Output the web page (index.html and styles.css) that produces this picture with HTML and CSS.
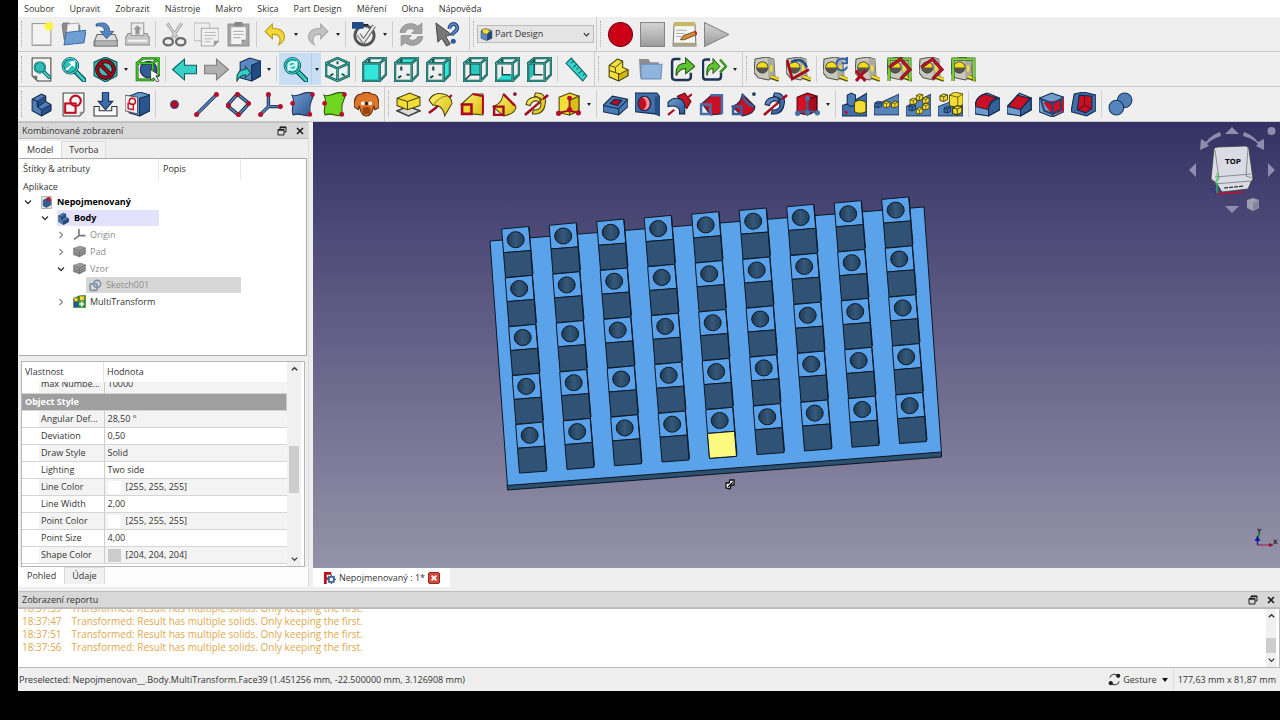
FILE: index.html
```html
<!DOCTYPE html>
<html lang="cs">
<head>
<meta charset="utf-8">
<title>FreeCAD</title>
<link rel="stylesheet" href="styles.css">
</head>
<body>
<svg class="defs" aria-hidden="true">
<defs>
<linearGradient id="gBlue" x1="0" y1="0" x2="1" y2="1"><stop offset="0" stop-color="#729fcf"/><stop offset="1" stop-color="#2a5591"/></linearGradient>
<linearGradient id="gGrey" x1="0" y1="0" x2="0" y2="1"><stop offset="0" stop-color="#d5d5d5"/><stop offset="1" stop-color="#9c9c9c"/></linearGradient>
<linearGradient id="gYel" x1="0" y1="0" x2="1" y2="1"><stop offset="0" stop-color="#fdf37a"/><stop offset="1" stop-color="#d9bd10"/></linearGradient>
<radialGradient id="gSun"><stop offset="0" stop-color="#fff23a"/><stop offset=".5" stop-color="#fff23a"/><stop offset="1" stop-color="#fff23a" stop-opacity="0"/></radialGradient>
<linearGradient id="gHole" x1="0" y1="0" x2="1" y2="0"><stop offset="0" stop-color="#1f3a52"/><stop offset=".5" stop-color="#35587a"/><stop offset="1" stop-color="#233f58"/></linearGradient>
</defs>

<symbol id="new" viewBox="0 0 24 24"><rect x="3" y="1.500" width="18" height="21" fill="#f3f3f3" stroke="#999"/><path d="M4 22h16" stroke="#aaa"/><circle cx="19" cy="4" r="5.500" fill="url(#gSun)"/></symbol>
<symbol id="open" viewBox="0 0 24 24"><path d="M1 3l1-2h6l2 2h8v14H3z" fill="#8b8b8b" stroke="#666" stroke-width=".7"/><path d="M6 2l11-1v14H5z" fill="#f2f2f2" stroke="#888" stroke-width=".6"/><path d="M5 10l19-2-2 12-19 2z" fill="#6f9fd2" stroke="#3c6ca5"/></symbol>
<symbol id="save" viewBox="0 0 24 24"><path d="M4 12h17l3 7v4H1v-4z" fill="#ddd" stroke="#666"/><path d="M2 18h21v5H2z" fill="#b5b5b5" stroke="#777" stroke-width=".7"/><path d="M3 2c8-3 13 0 13 7h4l-7 7-6-7h4c0-4-3-6-8-5z" fill="#5585bd" stroke="#204a87" stroke-width=".7"/></symbol>
<symbol id="print" viewBox="0 0 24 24"><path d="M3 11h18l3 5v6H0v-6z" fill="#c8c8c8" stroke="#888"/><path d="M6 1h12v12H6z" fill="#ececec" stroke="#999"/><path d="M12 3l4 4h-2v5h-4V7H8z" fill="#999"/><path d="M3 18h18" stroke="#f5f5f5" stroke-width="2"/></symbol>
<symbol id="cut" viewBox="0 0 24 24"><path d="M5 1l10 15M19 1L9 16" stroke="#a9a9a9" stroke-width="3"/><path d="M5 1l10 15M19 1L9 16" stroke="#e2e2e2" stroke-width="1"/><ellipse cx="6" cy="19" rx="4.500" ry="3.500" fill="none" stroke="#6c6c6c" stroke-width="2.200"/><ellipse cx="18" cy="19" rx="4.500" ry="3.500" fill="none" stroke="#6c6c6c" stroke-width="2.200"/></symbol>
<symbol id="copy" viewBox="0 0 24 24"><rect x="0" y="1" width="15" height="17" fill="#efefef" stroke="#bbb"/><path d="M7 6h17v12l-5 5H7z" fill="#efefef" stroke="#a8a8a8"/><path d="M10 10h11M10 13h11M10 16h8M10 19h6" stroke="#bdbdbd"/><path d="M24 18h-5v5z" fill="#999"/></symbol>
<symbol id="paste" viewBox="0 0 24 24"><rect x="2" y="2" width="20" height="21" fill="#a6a6a6" stroke="#8b8b8b"/><path d="M5 5h14v12l-4 4H5z" fill="#f3f3f3"/><rect x="8" y="0" width="8" height="4" rx="1" fill="#888"/><path d="M7 9h10M7 12h10M7 15h7" stroke="#b5b5b5"/><path d="M19 17h-4v4z" fill="#8b8b8b"/></symbol>
<symbol id="undo" viewBox="0 0 24 24"><path d="M9 2L2 9l7 7v-4c7-1 9 4 6 10 10-6 6-16-6-16z" fill="#f2d83a" stroke="#b89c10"/></symbol>
<symbol id="redo" viewBox="0 0 24 24"><path d="M15 2l7 7-7 7v-4c-7-1-9 4-6 10C-1 16 3 6 15 6z" fill="#c2c2c2" stroke="#a8a8a8"/></symbol>
<symbol id="check" viewBox="0 0 26 26"><circle cx="13" cy="14" r="10" fill="#eee" stroke="#555" stroke-width="3"/><path d="M7 13l5 7L23 4" fill="none" stroke="#666" stroke-width="4.500"/><path d="M7 13l5 7L23 4" fill="none" stroke="#e5e5e5" stroke-width="2.500"/><rect x="0" y="0" width="12" height="7" fill="#204a87"/><path d="M12 3h5" stroke="#222" stroke-width="2"/></symbol>
<symbol id="refresh" viewBox="0 0 24 24"><path d="M1 10C2 2 12-1 18 4l4-3v10H12l3-3c-4-3-8-1-9 2zM23 14c-1 8-11 11-17 6l-4 3V13h10l-3 3c4 3 8 1 9-2z" fill="#a3a3a3" stroke="#8b8b8b" stroke-width=".7"/></symbol>
<symbol id="whats" viewBox="0 0 26 26"><path d="M1 1l2 20 4-4 5 8 4-2-5-8 6-2z" fill="#777" stroke="#444"/><path d="M15 7c0-7 9-6 8 0-1 4-5 3-5 7" fill="none" stroke="#204a87" stroke-width="4"/><path d="M15 7c0-7 9-6 8 0-1 4-5 3-5 7" fill="none" stroke="#6c93c4" stroke-width="1.500"/><circle cx="19" cy="20" r="2.600" fill="#2d5893"/></symbol>
<symbol id="wb" viewBox="0 0 24 24"><path d="M2 5l10-3 10 3v14l-10 4-10-4z" fill="#5c88bd" stroke="#1b355a"/><path d="M13 10l9-4v13l-9 4z" fill="#23497c"/><path d="M4 3l8-2 6 4-5 7-8-3z" fill="#f0dd37" stroke="#534a07"/></symbol>
<symbol id="rec" viewBox="0 0 24 24"><circle cx="12" cy="12" r="11.500" fill="#cb0017" stroke="#790012"/></symbol>
<symbol id="stop" viewBox="0 0 24 24"><rect x=".500" y=".500" width="23" height="23" fill="url(#gGrey)" stroke="#858585"/></symbol>
<symbol id="macro" viewBox="0 0 24 24"><path d="M2 2h20l1 21H1z" fill="#f6f6f3" stroke="#777"/><path d="M2 0h20v4H2z" fill="#c7b76b"/><path d="M2 20h21v3H1z" fill="#aaa583"/><path d="M4 8h10M4 11h8M4 14h5" stroke="#aaa"/><path d="M8 17l3-4 11-4 2 3-12 5z" fill="#d28a3d" stroke="#65421c" stroke-width=".8"/><path d="M22 9l2 3" stroke="#c22" stroke-width="2"/></symbol>
<symbol id="play" viewBox="0 0 24 24"><path d="M.500 .500v23L24 12z" fill="url(#gGrey)" stroke="#858585"/></symbol>

<symbol id="lens" viewBox="0 0 24 24"><path d="M14 14l8 8" stroke="#0b4e55" stroke-width="5" stroke-linecap="round"/><path d="M14 14l8 8" stroke="#39d0c5" stroke-width="2.800" stroke-linecap="round"/><circle cx="9" cy="8.500" r="7.200" fill="#2fbfb9" stroke="#0b4e55" stroke-width="2.400"/><circle cx="9" cy="8.500" r="7.200" fill="none" stroke="#49ded4" stroke-width="1"/></symbol>
<symbol id="fitall" viewBox="0 0 24 24"><path d="M3 1h18v22H8l-5-5z" fill="#f4f4f2" stroke="#444"/><path d="M3 18h5v5z" fill="#777"/><use href="#lens" x="4" y="4" width="17" height="17"/></symbol>
<symbol id="fitsel" viewBox="0 0 24 24"><use href="#lens" width="24" height="24"/><path d="M4 12l6-5-3-2 7-2-1 7-2-2-5 5z" fill="#fff"/></symbol>
<symbol id="style" viewBox="0 0 24 24"><path d="M12 0l11 5v13l-11 6L1 18V5z" fill="#31bdb5" stroke="#0b4e55"/><circle cx="12" cy="12" r="8" fill="#45b8b3" stroke="#290005" stroke-width="4"/><path d="M6 6l12 12" stroke="#290005" stroke-width="4"/><circle cx="12" cy="12" r="8" fill="none" stroke="#970b1c" stroke-width="2.500"/><path d="M6 6l12 12" stroke="#970b1c" stroke-width="2.500"/></symbol>
<symbol id="bbox" viewBox="0 0 24 24"><circle cx="13" cy="12" r="8" fill="#315b96" stroke="#142a4c"/><path d="M2 6h15v16H2zM2 6l6-5h15l-6 5M23 1v16l-6 5" fill="none" stroke="#154c08" stroke-width="2.600"/><path d="M2 6h15v16H2zM2 6l6-5h15l-6 5M23 1v16l-6 5" fill="none" stroke="#45cb28" stroke-width="1.500"/><path d="M15 12v10l3-2 3 4 2-1-3-5h4z" fill="#fff" stroke="#333" stroke-width=".8"/></symbol>
<symbol id="back" viewBox="0 0 24 24"><path d="M.500 12L12 2v6h11.500v8H12v6z" fill="#36d2c7" stroke="#0b5d60"/></symbol>
<symbol id="fwd" viewBox="0 0 24 24"><path d="M23.500 12L12 2v6H.500v8H12v6z" fill="#b0b0b0" stroke="#7d7d7d"/></symbol>
<symbol id="link" viewBox="0 0 24 24"><path d="M4 5l9-4 11 3v14l-9 5-11-3z" fill="#5a88c0" stroke="#132c50"/><path d="M15 8l9-4v14l-9 5z" fill="#234c85" stroke="#132c50"/><path d="M1 23c-1-8 3-11 8-11V9l5 6-5 5v-3c-4 0-6 2-8 6z" fill="#35d0c5" stroke="#0b4e55"/></symbol>
<symbol id="sync" viewBox="0 0 24 24"><use href="#lens" width="24" height="24"/><path d="M5 8c1-4 5-4 7-2l1-2v4H9M13 9c-1 4-5 4-7 2l-1 2V9h4" fill="none" stroke="#e9ffff" stroke-width="1.600"/></symbol>
<symbol id="frame" viewBox="0 0 24 24"><path d="M1 6h16v17H1zM1 6l6-5h16l-6 5M23 1v16l-6 6M7 1v5" fill="none" stroke="#0d5b56" stroke-width="2.300"/><path d="M1 6h16v17H1zM1 6l6-5h16l-6 5M23 1v16l-6 6" fill="none" stroke="#70cfc4" stroke-width=".6"/></symbol>
<symbol id="inner" viewBox="0 0 24 24"><path d="M7 9v4M4 20l3-2M12 17h3" stroke="#174d4a" stroke-width="2"/></symbol>
<symbol id="iso" viewBox="0 0 24 24"><path d="M12 1l11 5v12l-11 5-11-5V6zM1 6l11 5 11-5M12 11v12" fill="#e8f3f1" stroke="#0d5b56" stroke-width="2.400"/><path d="M12 1l11 5v12l-11 5-11-5V6zM1 6l11 5 11-5M12 11v12" fill="none" stroke="#63c9be" stroke-width=".7"/><path d="M12 4v3M5 18l3-2M16 16l3 2" stroke="#164e4b" stroke-width="1.800"/></symbol>
<symbol id="vfront" viewBox="0 0 24 24"><path d="M1 6h16v17H1z" fill="#36e5da"/><use href="#frame"/></symbol>
<symbol id="vtop" viewBox="0 0 24 24"><path d="M1 6l6-5h16l-6 5z" fill="#36e5da"/><use href="#inner"/><use href="#frame"/></symbol>
<symbol id="vright" viewBox="0 0 24 24"><path d="M17 6l6-5v16l-6 6z" fill="#36e5da"/><use href="#inner"/><use href="#frame"/></symbol>
<symbol id="vrear" viewBox="0 0 24 24"><path d="M7 6h10v11H7z" fill="#2bc9c0"/><path d="M7 6v11h10M7 17l-5 5" fill="none" stroke="#174d4a" stroke-width="1.500"/><use href="#frame"/></symbol>
<symbol id="vbottom" viewBox="0 0 24 24"><path d="M1 23l6-6h16l-6 6z" fill="#2bdcd0"/><path d="M7 9v8h8" fill="none" stroke="#174d4a" stroke-width="1.500"/><use href="#frame"/></symbol>
<symbol id="vleft" viewBox="0 0 24 24"><path d="M1 6l6-5v16l-6 6z" fill="#2bc0b8"/><path d="M7 6v11h8" fill="none" stroke="#174d4a" stroke-width="1.500"/><use href="#frame"/></symbol>
<symbol id="ruler" viewBox="0 0 24 24"><path d="M7 1l15 17-4 5L2 6z" fill="#37d3ca" stroke="#0b5d60"/><path d="M9 4l-2 2M12 7l-3 3M14 10l-2 2M17 13l-3 3M20 16l-2 2" stroke="#0b5d60"/></symbol>
<symbol id="part" viewBox="0 0 24 24"><path d="M3 8l8-6 5 2v6l5 2v6l-9 5-9-4z" fill="#f4e03c" stroke="#3f3a08"/><path d="M3 8l6 2 7-6M9 10v5l6 2 6-5M12 23v-7M3 13l6 2" fill="none" stroke="#3f3a08" stroke-width=".9"/><path d="M12 17l9-5v6l-9 5z" fill="#cfb516" stroke="#3f3a08" stroke-width=".8"/></symbol>
<symbol id="folder" viewBox="0 0 24 24"><path d="M1 2h9l2 3h8v15H2z" fill="#8e8e8e"/><path d="M3 7h20l-1 14H3z" fill="#8fb5df" stroke="#6b91be"/></symbol>
<symbol id="export" viewBox="0 0 24 24"><path d="M10 2H5Q2 2 2 5v14q0 3 3 3h12q3 0 3-3v-4" fill="none" stroke="#1e3556" stroke-width="2.400"/><path d="M6 18C5 9 9 6 15 6V1l9 8-9 7v-5c-4 0-7 2-9 7z" fill="#5fc431" stroke="#1c5409"/></symbol>
<symbol id="exports" viewBox="0 0 25 24"><path d="M8 2H4Q1 2 1 5v14q0 3 3 3h12q3 0 3-3v-4" fill="none" stroke="#1e3556" stroke-width="2.400"/><path d="M5 18C4 9 7 6 11 6V1l7 8-7 7v-5c-3 0-5 2-6 7z" fill="#5fc431" stroke="#1c5409"/><path d="M18 2l6 7-6 6" fill="none" stroke="#3a961d" stroke-width="2.500"/></symbol>
<symbol id="tape" viewBox="0 0 24 24"><path d="M1 2l11-2 7 2 1 16-6 4-10-2-4-5z" fill="#c9c9c0" stroke="#55554d"/><path d="M13 1l6 1 1 16-6 3z" fill="#aaaaa2"/><circle cx="8" cy="10" r="5.500" fill="#55554b" stroke="#33332b" stroke-width=".6"/><path d="M3 10a5 5 0 0 1 10 0z" fill="#f4dc19"/><path d="M16.500 8v6" stroke="#f2df30" stroke-width="2.500"/><path d="M16 19l8 3" stroke="#4a4408" stroke-width="4"/><path d="M16 18.500l8 3" stroke="#ead52b" stroke-width="2.500"/></symbol>
<symbol id="angle" viewBox="0 0 24 24"><use href="#tape"/><path d="M1 3l5 18 16-9" fill="none" stroke="#a3091b" stroke-width="2.600"/><path d="M5 5c7-4 12-2 15 5" fill="none" stroke="#274e82" stroke-width="2.600"/></symbol>
<symbol id="tref" viewBox="0 0 24 24"><use href="#tape"/><path d="M13 7c0-7 8-6 9-4l1-3v6h-5M23 9c-1 5-8 5-9 1" fill="none" stroke="#3567a4" stroke-width="2"/></symbol>
<symbol id="tdel" viewBox="0 0 24 24"><use href="#tape"/><path d="M1 13l9 10M10 13L1 23" stroke="#ad0c1e" stroke-width="3"/></symbol>
<symbol id="greenf" viewBox="0 0 24 24"><path d="M2 23V2h20v21" fill="none" stroke="#2c6811" stroke-width="3"/><path d="M2 23V2h20v21" fill="none" stroke="#7fd33b" stroke-width="1.800"/></symbol>
<symbol id="redf" viewBox="0 0 24 24"><path d="M2 10l11-8 9 10-9 9" fill="none" stroke="#740613" stroke-width="3"/><path d="M2 10l11-8 9 10-9 9" fill="none" stroke="#be1528" stroke-width="1.800"/></symbol>
<symbol id="tall" viewBox="0 0 24 24"><use href="#tape"/><use href="#greenf"/><use href="#redf"/></symbol>
<symbol id="tred" viewBox="0 0 24 24"><use href="#tape"/><use href="#redf"/></symbol>
<symbol id="tgreen" viewBox="0 0 24 24"><use href="#tape"/><use href="#greenf"/></symbol>

<symbol id="body" viewBox="0 0 24 24"><path d="M3 7l9-5 4 2v5l5 3v6l-9 5-9-5z" fill="#507fb8" stroke="#11294d"/><path d="M12 17l9-5v6l-9 5zM8 9l8-5v5l-7 5z" fill="#28508a" stroke="#11294d" stroke-width=".8"/><path d="M3 7l5 2v5l4 3" fill="none" stroke="#11294d"/></symbol>
<symbol id="sketch" viewBox="0 0 24 24"><path d="M2 1h20v18l-4 4H2z" fill="#f5f4f3" stroke="#444"/><path d="M22 19h-4v4z" fill="#999"/><rect x="4" y="11" width="10" height="9" fill="none" stroke="#c10d25" stroke-width="2"/><circle cx="14" cy="8.500" r="5" fill="none" stroke="#c10d25" stroke-width="2"/></symbol>
<symbol id="import" viewBox="0 0 24 24"><path d="M1 14h5v4h12v-4h5v9H1z" fill="#fafafa" stroke="#333"/><path d="M9 0h6v9h4l-7 8-7-8h4z" fill="#3e6da9" stroke="#14305a"/></symbol>
<symbol id="mapsk" viewBox="0 0 24 24"><path d="M4 4l10-4 10 3v15l-10 5-10-3z" fill="#6a97cb" stroke="#132c50"/><path d="M14 6l10-3v15l-10 5z" fill="#2a558f" stroke="#132c50"/><path d="M0 3l12 2v16L0 18z" fill="#f1ebea" stroke="#444" stroke-width=".8"/><circle cx="7" cy="9" r="3" fill="none" stroke="#c10d25" stroke-width="1.300"/><path d="M3 11l5 1v5l-5-1z" fill="none" stroke="#c10d25" stroke-width="1.300"/></symbol>
<symbol id="point" viewBox="0 0 24 24"><circle cx="12" cy="12" r="3.800" fill="#b00c2a" stroke="#395a92"/></symbol>
<symbol id="line" viewBox="0 0 24 24"><path d="M2 22L22 2" stroke="#14294a" stroke-width="3.200"/><path d="M2 22L22 2" stroke="#5b87bd" stroke-width="1.600"/><circle cx="2.500" cy="21.500" r="2.400" fill="#b2102c"/><circle cx="21.500" cy="2.500" r="2.400" fill="#b2102c"/></symbol>
<symbol id="plane" viewBox="0 0 24 24"><path d="M11 2l11 9-10 11L1 13z" fill="none" stroke="#14294a" stroke-width="3.400"/><path d="M11 2l11 9-10 11L1 13z" fill="none" stroke="#5b87bd" stroke-width="1.600"/><g fill="#b2102c"><circle cx="11" cy="2.500" r="2.400"/><circle cx="21.500" cy="11" r="2.400"/><circle cx="12" cy="21.500" r="2.400"/><circle cx="2.500" cy="13" r="2.400"/></g></symbol>
<symbol id="lcs" viewBox="0 0 24 24"><path d="M10 2v12h12M10 14l-8 8" fill="none" stroke="#14294a" stroke-width="3.200"/><path d="M10 2v12h12M10 14l-8 8" fill="none" stroke="#5b87bd" stroke-width="1.500"/><g fill="#b2102c"><circle cx="10" cy="2.500" r="2.400"/><circle cx="21.500" cy="14" r="2.400"/><circle cx="2.500" cy="21.500" r="2.400"/></g></symbol>
<symbol id="blobB" viewBox="0 0 24 24"><path d="M2 3c6 3 11-5 20-2 2 6-6 8-2 21-6 3-9-3-17 0-3-6 3-11-1-19z" fill="url(#gBlue)" stroke="#173259"/><g fill="#b2102c"><circle cx="21.500" cy="2.500" r="2.300"/><circle cx="2.500" cy="11" r="2.300"/><circle cx="19" cy="21.500" r="2.300"/></g></symbol>
<symbol id="blobG" viewBox="0 0 24 24"><path d="M2 3c6 3 11-5 20-2 2 6-6 8-2 21-6 3-9-3-17 0-3-6 3-11-1-19z" fill="#6fd71d" stroke="#245208"/><g fill="#b2102c"><circle cx="21.500" cy="2.500" r="2.300"/><circle cx="2.500" cy="11" r="2.300"/><circle cx="19" cy="21.500" r="2.300"/></g></symbol>
<symbol id="clone" viewBox="0 0 24 24"><path d="M7 2c3-3 8-2 10 0 6 0 7 5 7 13l-4 2-1-4c-1 6-3 10-7 10s-6-4-7-10l-1 4-4-3C0 7 2 2 7 2z" fill="#dd762a" stroke="#5c2a07"/><path d="M8 16c2-2 6-2 8 0l-1 5H9z" fill="#9d4510"/><circle cx="8.500" cy="11" r="1.800" fill="#fff"/><circle cx="15.500" cy="11" r="1.800" fill="#fff"/><circle cx="12" cy="11" r="1.600" fill="#222"/></symbol>
<symbol id="pad" viewBox="0 0 24 24"><path d="M1 18l11-4 11 4-11 5z" fill="#ddd" stroke="#444" stroke-width="1.500"/><path d="M1 6l12-5 10 4v8l-12 4-10-4z" fill="#f2dd37" stroke="#4b4407"/><path d="M1 6l10 3 12-4M11 9v8" fill="none" stroke="#4b4407"/></symbol>
<symbol id="revol" viewBox="0 0 24 24"><path d="M1 20L23 3" stroke="#a10d22" stroke-width="2"/><path d="M1 8c2-5 8-8 14-6 5 1 8 5 8 9l-7 12c-1-8-6-11-11-10z" fill="url(#gYel)" stroke="#4b4407"/><path d="M5 13c5-8 9-9 13-9" fill="none" stroke="#9a8810"/><path d="M1 20l7-5" stroke="#a10d22" stroke-width="2"/></symbol>
<symbol id="loft" viewBox="0 0 24 24"><path d="M1 12L12 2h10v20l-11-1z" fill="url(#gYel)" stroke="#4b4407"/><path d="M12 2l10 2v17" fill="none" stroke="#b30d22" stroke-width="2"/><path d="M2 12h9v9H2z" fill="#ecd631" stroke="#a80b20" stroke-width="2.500"/></symbol>
<symbol id="pipe" viewBox="0 0 24 24"><path d="M1 14c8-3 9-8 10-12l12 12c0 6-6 8-12 9z" fill="url(#gYel)" stroke="#4b4407"/><path d="M11 2l11 11M2 14h9v8H2z" fill="none" stroke="#a80b20" stroke-width="2.300"/><circle cx="22" cy="2" r="1.800" fill="#8f1630"/></symbol>
<symbol id="helix" viewBox="0 0 24 24"><path d="M1 22L23 3" stroke="#a80b20" stroke-width="2.200"/><path d="M2 12C3 5 12 3 17 7l-2 3c-4-3-8-1-9 3zM11 1c8-1 11 5 9 12-1 6-6 9-12 8l1-4c5 1 8-2 7-7s-2-5-6-6z" fill="url(#gYel)" stroke="#4b4407"/><path d="M1 22l6-5M18 7l5-4" stroke="#a80b20" stroke-width="2.200"/></symbol>
<symbol id="prim" viewBox="0 0 24 24"><path d="M3 5l10-4 9 3v14l-9 4-10-2z" fill="#f4df34" stroke="#4b4407"/><path d="M13 8l9-4v14l-9 4z" fill="#d9bc17" stroke="#4b4407"/><path d="M13 7v11M2 20l11-2 9 2" stroke="#8f0e20" stroke-width="1.700" fill="none"/><g fill="#b2102c"><circle cx="13" cy="6" r="2.300"/><circle cx="2.500" cy="20.500" r="2.500"/><circle cx="13" cy="17" r="2.500"/><circle cx="21.500" cy="20" r="2.500"/></g></symbol>
<symbol id="pocket" viewBox="0 0 24 24"><path d="M0 13l9-9 15 3v7l-9 8-15-3z" fill="#4b7bb5" stroke="#10284b"/><path d="M0 13l15 3 9-9M15 16v6" fill="none" stroke="#10284b"/><path d="M7 11l4-4 7 1-4 5z" fill="#b40d22" stroke="#10284b"/></symbol>
<symbol id="hole" viewBox="0 0 24 24"><path d="M0 1h21l3 4v18l-5-2-19-2z" fill="#3f6fa9" stroke="#10284b"/><path d="M19 4l5 1v18l-5-2z" fill="#264e87"/><ellipse cx="9" cy="11" rx="6" ry="7" fill="#c60e22" stroke="#10284b"/><path d="M7 5c5 3 5 9 1 12 3 1 6-2 6-6s-3-8-7-6z" fill="#ee969c"/></symbol>
<symbol id="groove" viewBox="0 0 24 24"><path d="M10 4l7-3 6 8-4 7z" fill="#ca1426" stroke="#560610"/><path d="M1 10c5-6 14-5 16 2v9h-5c1-6-4-9-11-7z" fill="url(#gBlue)" stroke="#10284b"/><path d="M1 22l6-5M19 6l5-4" stroke="#a80b20" stroke-width="2"/></symbol>
<symbol id="sloft" viewBox="0 0 24 24"><path d="M3 11L12 3h10v18l-11 1z" fill="#cb1023" stroke="#10284b"/><path d="M11 3h11v18M2 12h9v9H2z" fill="none" stroke="#476fa7" stroke-width="2.400"/></symbol>
<symbol id="spipe" viewBox="0 0 24 24"><path d="M1 14c8-3 9-8 10-12l12 12c0 6-6 8-12 9z" fill="#c60f22" stroke="#10284b"/><path d="M11 2c1 7 5 10 11 12M2 14h8v7H2z" fill="none" stroke="#395f97" stroke-width="2.400"/><circle cx="22" cy="2" r="1.800" fill="#273959"/></symbol>
<symbol id="shelix" viewBox="0 0 24 24"><path d="M1 22L23 3" stroke="#a80b20" stroke-width="2.200"/><path d="M2 12C3 5 12 3 17 7l-2 3c-4-3-8-1-9 3zM11 1c8-1 11 5 9 12-1 6-6 9-12 8l1-4c5 1 8-2 7-7s-2-5-6-6z" fill="url(#gBlue)" stroke="#10284b"/><path d="M1 22l6-5M18 7l5-4" stroke="#a80b20" stroke-width="2.200"/></symbol>
<symbol id="sprim" viewBox="0 0 24 24"><path d="M2 5l10-4 9 3v14l-9 4-10-2z" fill="#d31226" stroke="#480510"/><path d="M12 7l9-3v14l-9 4z" fill="#a70c1f" stroke="#480510"/><path d="M12 7v11M2 20l10-2 10 2" stroke="#395f97" stroke-width="2" fill="none"/><g fill="#466fa5"><circle cx="12" cy="6" r="2.300"/><circle cx="2.500" cy="20.500" r="2.500"/><circle cx="12" cy="20" r="2.500"/><circle cx="21.500" cy="20" r="2.500"/></g></symbol>
<symbol id="mirror" viewBox="0 0 24 24"><path d="M0 13l9-3 15-9v22H0z" fill="#3f6fa9" stroke="#10284b"/><path d="M5 3l4-2 4 2v9l-4 2-4-2z" fill="#4d7eb8" stroke="#10284b"/><path d="M12 10q5-4 11 0v9q-5 3-11 0z" fill="#f2dd35" stroke="#4b4407"/><path d="M2 18l4 1-2 3" fill="#c40f22"/></symbol>
<symbol id="cubeY" viewBox="0 0 10 10"><path d="M1 3l4-2 4 1v5L5 9 1 8z" fill="#f2dd35" stroke="#403a05"/><path d="M1 3l4 1 4-2M5 4v5" fill="none" stroke="#403a05" stroke-width=".8"/></symbol>
<symbol id="cubeB" viewBox="0 0 10 10"><path d="M1 3l4-2 4 1v5L5 9 1 8z" fill="#3c6ba6" stroke="#10284b"/><path d="M1 3l4 1 4-2M5 4v5" fill="none" stroke="#10284b" stroke-width=".8"/></symbol>
<symbol id="linpat" viewBox="0 0 24 24"><path d="M0 13L24 2v20H0z" fill="#5684bb" stroke="#10284b" stroke-width=".8"/><use href="#cubeB" x="0" y="8" width="8" height="8"/><use href="#cubeY" x="8" y="8" width="8" height="8"/><use href="#cubeY" x="16" y="8" width="8" height="8"/></symbol>
<symbol id="polpat" viewBox="0 0 24 24"><path d="M0 14L24 2v21H0z" fill="#5684bb" stroke="#10284b" stroke-width=".8"/><use href="#cubeB" x="2" y="11" width="8" height="8"/><use href="#cubeY" x="3" y="5" width="8" height="8"/><use href="#cubeY" x="9" y="1" width="8" height="8"/><use href="#cubeY" x="15" y="4" width="8" height="8"/><use href="#cubeY" x="15" y="10" width="8" height="8"/><use href="#cubeY" x="9" y="14" width="8" height="8"/></symbol>
<symbol id="multi" viewBox="0 0 24 24"><path d="M0 14l8-3L24 2v21H0z" fill="#5684bb" stroke="#10284b" stroke-width=".8"/><path d="M11 3l5-3 8 2v10l-5 3-8-2z" fill="#f2dd35" stroke="#403a05" stroke-width=".8"/><path d="M11 3l8 2 5-3M19 5v10" fill="none" stroke="#403a05" stroke-width=".7"/><use href="#cubeY" x="1" y="1" width="9" height="9"/><use href="#cubeY" x="13" y="12" width="11" height="11"/><use href="#cubeB" x="5" y="13" width="8" height="8"/></symbol>
<symbol id="fillet" viewBox="0 0 24 24"><path d="M0 14C0 6 5 3 12 1l12 5v11l-11 6-13-2z" fill="#6e9acc" stroke="#10284b"/><path d="M0 14C1 6 6 3 9 2l13 4c-6 1-9 5-9 11z" fill="#c80f23" stroke="#10284b"/><path d="M13 17c0-5 4-9 11-11v11l-11 6z" fill="#355f99" stroke="#10284b"/></symbol>
<symbol id="chamfer" viewBox="0 0 24 24"><path d="M0 14L12 1l12 5v11l-11 6-13-2z" fill="#6e9acc" stroke="#10284b"/><path d="M1 14L10 3l12 3-9 11z" fill="#c80f23" stroke="#10284b"/><path d="M13 17l10-11v11l-10 6z" fill="#355f99" stroke="#10284b"/></symbol>
<symbol id="draft" viewBox="0 0 24 24"><path d="M0 6l12-5 12 4v14l-11 5-13-5z" fill="#729cca" stroke="#10284b"/><path d="M4 10l20-3v11l-11 4z" fill="#c80f23"/><path d="M0 6l13 5 11-6M13 11v13M2 8l3 10 8 3 8-4V7" fill="none" stroke="#204473" stroke-width="1.800"/></symbol>
<symbol id="thick" viewBox="0 0 24 24"><path d="M3 2l9-2 12 3v15l-9 5-15-4z" fill="#3f6ea8" stroke="#10284b"/><path d="M8 3l12 1v12l-6 4-8-3z" fill="#c80f23" stroke="#10284b"/><path d="M13 3v10l-6 4M13 13l7 3" fill="none" stroke="#69101d"/></symbol>
<symbol id="bool" viewBox="0 0 24 24"><circle cx="16" cy="8" r="7" fill="#517fb5" stroke="#173964"/><circle cx="8" cy="15" r="7" fill="#5485bf" stroke="#173964"/></symbol>
<symbol id="doc" viewBox="0 0 24 24"><path d="M3 1h18v22H3z" fill="#e6e6e6" stroke="#777"/><path d="M6 8l7-4 7 3v9l-8 5-6-3z" fill="#315f9c" stroke="#142c52"/><circle cx="16" cy="6" r="4" fill="#c51426"/></symbol>
<symbol id="gpad" viewBox="0 0 24 24"><path d="M1 6l12-4 10 3v11l-11 6-11-4z" fill="#9b9b9b" stroke="#777"/><path d="M1 7l11 4 11-5M1 12l11 4 11-5M1 16l11 4 11-5M12 11v11" fill="none" stroke="#6e6e6e" stroke-width="1.500"/></symbol>
<symbol id="axes" viewBox="0 0 24 24"><path d="M11 2v12h12M11 14l-9 7" fill="none" stroke="#777" stroke-width="3"/></symbol>
<symbol id="gsk" viewBox="0 0 24 24"><rect x="2" y="9" width="13" height="12" rx="2" fill="none" stroke="#7d93aa" stroke-width="3"/><circle cx="15" cy="9" r="6.500" fill="none" stroke="#7d93aa" stroke-width="3"/></symbol>
<symbol id="mt" viewBox="0 0 24 24"><path d="M1 7l9-5 13-1v22H1z" fill="#2f9d33" stroke="#1c5426"/><path d="M2 5h7v7H2zM12 2h9v8h-9z" fill="#f0df45" stroke="#5b5408"/><path d="M2 13h8v9H2z" fill="#2456a0"/><path d="M16 12v9M11.500 16.500h9" stroke="#fff" stroke-width="3"/></symbol>
<symbol id="float" viewBox="0 0 10 10"><path d="M3 3V1h6v5H7M1 3.500h6V9H1z" fill="none" stroke="#222"/><path d="M3 1.500h6M1 4h6" stroke="#222" stroke-width="1.600"/></symbol>
<symbol id="close" viewBox="0 0 10 10"><path d="M2 2l6 6M8 2L2 8" stroke="#222" stroke-width="1.700"/></symbol>
<symbol id="down" viewBox="0 0 10 10"><path d="M2 3.500l3 3 3-3" fill="none" stroke="#333" stroke-width="1.300"/></symbol>
<symbol id="up" viewBox="0 0 10 10"><path d="M2 6.500l3-3 3 3" fill="none" stroke="#333" stroke-width="1.500"/></symbol>
<symbol id="right" viewBox="0 0 10 10"><path d="M3.500 2l3 3-3 3" fill="none" stroke="#888" stroke-width="1.200"/></symbol>
<symbol id="gesture" viewBox="0 0 14 14"><path d="M2 5c1-4 5-4 8-3M12 9c-1 4-5 4-8 3" fill="none" stroke="#555" stroke-width="1.300"/><circle cx="11" cy="3" r="2.300" fill="#222"/><circle cx="3" cy="11" r="2.300" fill="#222"/></symbol>
<symbol id="fc" viewBox="0 0 14 14"><path d="M1 1h8v3H4v3h3v2H4v5H1z" fill="#b9121f"/><circle cx="9" cy="9" r="3" fill="none" stroke="#3d64a0" stroke-width="2"/><path d="M9 4v2M9 12v2M4 9h2M12 9h2M5.500 5.500l1 1M11.500 11.500l1 1M12.500 5.500l-1 1M5.500 12.500l1-1" stroke="#3d64a0" stroke-width="1.500"/></symbol>
</svg>

<div class="app">
<nav class="menubar" aria-label="Menu">
<button>Soubor</button><button>Upravit</button><button>Zobrazit</button><button>Nástroje</button><button>Makro</button><button>Skica</button><button>Part Design</button><button>Měření</button><button>Okna</button><button>Nápověda</button>
</nav>

<div class="toolrow">
<div class="toolbar">
<button class="tool" aria-label="Nový"><svg><use href="#new"/></svg></button>
<button class="tool" aria-label="Otevřít"><svg><use href="#open"/></svg></button>
<button class="tool" aria-label="Uložit"><svg><use href="#save"/></svg></button>
<button class="tool" aria-label="Tisk"><svg><use href="#print"/></svg></button>
<i class="sep"></i>
<button class="tool" aria-label="Vyjmout"><svg><use href="#cut"/></svg></button>
<button class="tool" aria-label="Kopírovat"><svg><use href="#copy"/></svg></button>
<button class="tool" aria-label="Vložit"><svg><use href="#paste"/></svg></button>
<i class="sep"></i>
<button class="tool" aria-label="Zpět"><svg><use href="#undo"/></svg></button><button class="drop" aria-label="Historie zpět"></button>
<button class="tool" aria-label="Znovu"><svg><use href="#redo"/></svg></button><button class="drop" aria-label="Historie znovu"></button>
<i class="sep"></i>
<button class="tool" aria-label="Označit"><svg><use href="#check"/></svg></button><button class="drop" aria-label="Možnosti označení"></button>
<i class="sep"></i>
<button class="tool" aria-label="Obnovit"><svg><use href="#refresh"/></svg></button>
<button class="tool wide" aria-label="Co je to"><svg><use href="#whats"/></svg></button>
</div>
<div class="toolbar">
<label class="workbench"><svg><use href="#wb"/></svg><select aria-label="Pracovní prostředí"><option>Part Design</option></select><svg class="chev"><use href="#down"/></svg></label>
</div>
<div class="toolbar">
<button class="tool" aria-label="Nahrát makro"><svg><use href="#rec"/></svg></button>
<button class="tool" aria-label="Zastavit makro"><svg><use href="#stop"/></svg></button>
<button class="tool" aria-label="Makra"><svg><use href="#macro"/></svg></button>
<button class="tool" aria-label="Spustit makro"><svg><use href="#play"/></svg></button>
</div>
</div>

<div class="toolrow">
<div class="toolbar">
<button class="tool" aria-label="Zobrazit vše"><svg><use href="#fitall"/></svg></button>
<button class="tool" aria-label="Zobrazit výběr"><svg><use href="#fitsel"/></svg></button>
<button class="tool" aria-label="Styl zobrazení"><svg><use href="#style"/></svg></button><button class="drop" aria-label="Styly"></button>
<button class="tool" aria-label="Ohraničení"><svg><use href="#bbox"/></svg></button>
<i class="sep"></i>
<button class="tool" aria-label="Předchozí"><svg><use href="#back"/></svg></button>
<button class="tool" aria-label="Další"><svg><use href="#fwd"/></svg></button>
<button class="tool" aria-label="Přejít na odkaz"><svg><use href="#link"/></svg></button><button class="drop" aria-label="Odkazy"></button>
<i class="sep"></i>
<button class="tool on" aria-label="Synchronizovat pohled"><svg><use href="#sync"/></svg></button><button class="drop on" aria-label="Pohledy"></button>
<button class="tool" aria-label="Izometrický"><svg><use href="#iso"/></svg></button>
<i class="sep"></i>
<button class="tool" aria-label="Zepředu"><svg><use href="#vfront"/></svg></button>
<button class="tool" aria-label="Shora"><svg><use href="#vtop"/></svg></button>
<button class="tool" aria-label="Zprava"><svg><use href="#vright"/></svg></button>
<i class="sep"></i>
<button class="tool" aria-label="Zezadu"><svg><use href="#vrear"/></svg></button>
<button class="tool" aria-label="Zdola"><svg><use href="#vbottom"/></svg></button>
<button class="tool" aria-label="Zleva"><svg><use href="#vleft"/></svg></button>
<i class="sep"></i>
<button class="tool" aria-label="Změřit vzdálenost"><svg><use href="#ruler"/></svg></button>
</div>
<div class="toolbar">
<button class="tool" aria-label="Vytvořit díl"><svg><use href="#part"/></svg></button>
<button class="tool" aria-label="Vytvořit skupinu"><svg><use href="#folder"/></svg></button>
<button class="tool" aria-label="Vytvořit odkaz"><svg><use href="#export"/></svg></button>
<button class="tool" aria-label="Vytvořit pododkaz"><svg><use href="#exports"/></svg></button><button class="drop" aria-label="Druhy odkazů"></button>
</div>
<div class="toolbar">
<button class="tool" aria-label="Lineární měření"><svg><use href="#tape"/></svg></button>
<button class="tool" aria-label="Úhlové měření"><svg><use href="#angle"/></svg></button>
<i class="sep"></i>
<button class="tool" aria-label="Obnovit měření"><svg><use href="#tref"/></svg></button>
<button class="tool" aria-label="Smazat měření"><svg><use href="#tdel"/></svg></button>
<button class="tool" aria-label="Přepnout vše"><svg><use href="#tall"/></svg></button>
<button class="tool" aria-label="Přepnout 3D"><svg><use href="#tred"/></svg></button>
<button class="tool" aria-label="Přepnout delta"><svg><use href="#tgreen"/></svg></button>
</div>
</div>

<div class="toolrow">
<div class="toolbar">
<button class="tool" aria-label="Těleso"><svg><use href="#body"/></svg></button>
<button class="tool" aria-label="Nový náčrt"><svg><use href="#sketch"/></svg></button>
<button class="tool" aria-label="Upravit náčrt"><svg><use href="#import"/></svg></button>
<button class="tool" aria-label="Mapovat náčrt"><svg><use href="#mapsk"/></svg></button>
<i class="sep"></i>
<button class="tool" aria-label="Bod"><svg><use href="#point"/></svg></button>
<button class="tool" aria-label="Přímka"><svg><use href="#line"/></svg></button>
<button class="tool" aria-label="Rovina"><svg><use href="#plane"/></svg></button>
<button class="tool" aria-label="Souřadný systém"><svg><use href="#lcs"/></svg></button>
<button class="tool" aria-label="Tvarový pořadač"><svg><use href="#blobB"/></svg></button>
<button class="tool" aria-label="Dílčí pořadač"><svg><use href="#blobG"/></svg></button>
<button class="tool" aria-label="Klon"><svg><use href="#clone"/></svg></button>
</div>
<div class="toolbar">
<button class="tool" aria-label="Deska"><svg><use href="#pad"/></svg></button>
<button class="tool" aria-label="Rotace"><svg><use href="#revol"/></svg></button>
<button class="tool" aria-label="Profilování"><svg><use href="#loft"/></svg></button>
<button class="tool" aria-label="Tažení"><svg><use href="#pipe"/></svg></button>
<button class="tool" aria-label="Šroubovice"><svg><use href="#helix"/></svg></button>
<button class="tool" aria-label="Primitivum"><svg><use href="#prim"/></svg></button><button class="drop" aria-label="Primitiva"></button>
<i class="sep"></i>
<button class="tool" aria-label="Kapsa"><svg><use href="#pocket"/></svg></button>
<button class="tool" aria-label="Díra"><svg><use href="#hole"/></svg></button>
<button class="tool" aria-label="Drážka"><svg><use href="#groove"/></svg></button>
<button class="tool" aria-label="Odečíst profil"><svg><use href="#sloft"/></svg></button>
<button class="tool" aria-label="Odečíst tažení"><svg><use href="#spipe"/></svg></button>
<button class="tool" aria-label="Odečíst šroubovici"><svg><use href="#shelix"/></svg></button>
<button class="tool" aria-label="Odečíst primitivum"><svg><use href="#sprim"/></svg></button><button class="drop" aria-label="Odečítaná primitiva"></button>
<i class="sep"></i>
<button class="tool" aria-label="Zrcadlit"><svg><use href="#mirror"/></svg></button>
<button class="tool" aria-label="Lineární pole"><svg><use href="#linpat"/></svg></button>
<button class="tool" aria-label="Kruhové pole"><svg><use href="#polpat"/></svg></button>
<button class="tool" aria-label="Vícenásobná transformace"><svg><use href="#multi"/></svg></button>
<i class="sep"></i>
<button class="tool" aria-label="Zaoblení"><svg><use href="#fillet"/></svg></button>
<button class="tool" aria-label="Zkosení"><svg><use href="#chamfer"/></svg></button>
<button class="tool" aria-label="Úkos"><svg><use href="#draft"/></svg></button>
<button class="tool" aria-label="Tloušťka"><svg><use href="#thick"/></svg></button>
<i class="sep"></i>
<button class="tool" aria-label="Booleovská operace"><svg><use href="#bool"/></svg></button>
</div>
</div>

<main class="work">
<aside class="combo">
<header class="dock"><h2>Kombinované zobrazení</h2><button aria-label="Uvolnit"><svg><use href="#float"/></svg></button><button aria-label="Zavřít"><svg><use href="#close"/></svg></button></header>
<div class="tabs"><button class="cur">Model</button><button>Tvorba</button></div>
<div class="tree">
<div class="treehead"><span>Štítky &amp; atributy</span><span>Popis</span></div>
<p class="appname">Aplikace</p>
<ul>
<li class="l0 bold"><svg class="tw"><use href="#down"/></svg><svg><use href="#doc"/></svg><span>Nepojmenovaný</span></li>
<li class="l1 bold active"><svg class="tw"><use href="#down"/></svg><div><svg><use href="#body"/></svg><span>Body</span></div></li>
<li class="l2 dim"><svg class="tw"><use href="#right"/></svg><svg><use href="#axes"/></svg><span>Origin</span></li>
<li class="l2 dim"><svg class="tw"><use href="#right"/></svg><svg><use href="#gpad"/></svg><span>Pad</span></li>
<li class="l2 dim"><svg class="tw"><use href="#down"/></svg><svg><use href="#gpad"/></svg><span>Vzor</span></li>
<li class="l3 dim picked"><div><svg><use href="#gsk"/></svg><span>Sketch001</span></div></li>
<li class="l2"><svg class="tw"><use href="#right"/></svg><svg><use href="#mt"/></svg><span>MultiTransform</span></li>
</ul>
</div>
<div class="props">
<div class="propmain">
<div class="prophead"><span>Vlastnost</span><span>Hodnota</span></div>
<div class="propclip">
<table>
<tr><th>max Numbe...</th><td>10000</td></tr>
<tr class="group"><th colspan="2">Object Style</th></tr>
<tr><th>Angular Def...</th><td>28,50 °</td></tr>
<tr><th>Deviation</th><td>0,50</td></tr>
<tr><th>Draw Style</th><td>Solid</td></tr>
<tr><th>Lighting</th><td>Two side</td></tr>
<tr><th>Line Color</th><td><i class="chip"></i>[255, 255, 255]</td></tr>
<tr><th>Line Width</th><td>2,00</td></tr>
<tr><th>Point Color</th><td><i class="chip"></i>[255, 255, 255]</td></tr>
<tr><th>Point Size</th><td>4,00</td></tr>
<tr><th>Shape Color</th><td><i class="chip grey"></i>[204, 204, 204]</td></tr>
</table>
</div>
</div>
<div class="scroll"><svg><use href="#up"/></svg><i class="before"></i><i class="thumb"></i><i class="after"></i><svg><use href="#down"/></svg></div>
</div>
<div class="tabs low"><button class="cur">Pohled</button><button>Údaje</button></div>
</aside>

<section class="viewcol">
<div class="view">
<svg viewBox="313 122 967 446" preserveAspectRatio="xMidYMid meet">
<defs>
<g id="blk" stroke="#0c1726" stroke-width="1">
<path d="M501.700 229l27-2.500 2 24.200-27.200 2z" fill="#5aa2ea"/>
<path d="M503.500 252.700l27.200-2.200 1.800 25-27 2z" fill="#305375"/>
<path d="M529 227l4 47" fill="none"/>
<ellipse cx="515.700" cy="239.700" rx="8.500" ry="8" fill="url(#gHole)"/>
</g>
<g id="colm"><use href="#blk"/><use href="#blk" x="3.500" y="48.900"/><use href="#blk" x="7" y="97.800"/><use href="#blk" x="10.500" y="146.700"/><use href="#blk" x="14" y="195.600"/></g>
</defs>
<path d="M490 241l434-34 17.500 246-434 33z" fill="#5aa2ea" stroke="#0c1726"/>
<path d="M507 485.500l434.500-33.500v5l-434 33z" fill="#2d506f" stroke="#0c1726"/>
<g>
<use href="#colm"/><use href="#colm" x="47.500" y="-3.700"/><use href="#colm" x="95" y="-7.400"/><use href="#colm" x="142.500" y="-11.100"/><use href="#colm" x="190" y="-14.800"/><use href="#colm" x="237.500" y="-18.500"/><use href="#colm" x="285" y="-22.200"/><use href="#colm" x="332.500" y="-25.900"/><use href="#colm" x="380" y="-29.600"/>
</g>
<path d="M707.500 433.500l27-2.200 2 25-27 2z" fill="#fbf97e" stroke="#0c1726"/>
<path d="M726 488v-5h3l1-3h4v5h-3l-1 4z" fill="#fff" stroke="#111" stroke-width="1.300"/><path d="M728 487l5-5" stroke="#111" stroke-width="1.200"/>
<g fill="#8f8cae">
<path d="M1232 127l7 7h-14zM1232 213l7-7h-14zM1189 170l7-7v14zM1275 170l-7-7v14z"/>
<path d="M1220 132c-6 2-10 5-14 10l-5-3-1 11 9-4-2-2c4-4 8-6 14-8zM1244 132c6 2 10 5 14 10l6-3 0 11-8-4 2-2c-4-4-8-6-15-8z"/>
<circle cx="1271.500" cy="131" r="4"/>
</g>
<path d="M1247 200l6-2 6 2v8l-6 3-6-3z" fill="#9f9eae"/><path d="M1253 203l6-3v8l-6 3z" fill="#85849c"/>
<path d="M1214 149q1-2 4-2l27-1q4 0 4 4l4 29-2 3-3 7-26 3-5-8-6-5z" fill="#dadbe5" stroke="#333" stroke-width=".7"/>
<path d="M1215 150l4 29-5 3M1248 148l-2 28 6 2M1215 177l36-3M1214 184l37-3" fill="none" stroke="#777" stroke-width=".8"/>
<path d="M1224 188l20-2" stroke="#222" stroke-width="1.200" stroke-dasharray="4 1"/>
<text x="1225" y="164" class="cubetext">TOP</text>
<path d="M1217 194v-21" stroke="#22df55"/><path d="M1217 194l26-2" stroke="#c01035" stroke-width="1.500"/><path d="M1217 194l-7-6" stroke="#2020bd"/>
<path d="M1257.500 545v-9" stroke="#2020a8" stroke-width="1.500"/><path d="M1257.500 538l2-5" stroke="#168636" stroke-width="2"/><path d="M1254.500 541l3-5 3 5z" fill="#181a90"/><path d="M1257.500 545h14" stroke="#9b1740"/><path d="M1269 543l5 2-5 2z" fill="#8b1236"/>
<text x="1257" y="533" class="axistext">Y</text><text x="1273" y="544" class="axistext">X</text>
</svg>
</div>
<div class="doctabs"><div class="doctab"><svg><use href="#fc"/></svg><span>Nepojmenovaný : 1*</span><button aria-label="Zavřít dokument"><svg viewBox="0 0 10 10"><path d="M2 2l6 6M8 2L2 8" stroke="#fff" stroke-width="2"/></svg></button></div></div>
</section>
</main>

<section class="report">
<header class="dock"><h2>Zobrazení reportu</h2><button aria-label="Uvolnit"><svg><use href="#float"/></svg></button><button aria-label="Zavřít"><svg><use href="#close"/></svg></button></header>
<div class="log">
<div class="loglines">
<p><time>18:37:39</time>Transformed: Result has multiple solids. Only keeping the first.</p>
<p><time>18:37:47</time>Transformed: Result has multiple solids. Only keeping the first.</p>
<p><time>18:37:51</time>Transformed: Result has multiple solids. Only keeping the first.</p>
<p><time>18:37:56</time>Transformed: Result has multiple solids. Only keeping the first.</p>
</div>
<div class="scroll"><svg><use href="#up"/></svg><i class="before"></i><i class="thumb"></i><svg><use href="#down"/></svg></div>
</div>
</section>

<footer class="status">
<span class="msg">Preselected: Nepojmenovan__.Body.MultiTransform.Face39 (1.451256 mm, -22.500000 mm, 3.126908 mm)</span>
<button class="nav"><svg><use href="#gesture"/></svg>Gesture<i class="tri"></i></button>
<span class="dims">177,63 mm x 81,87 mm</span>
</footer>
</div>
</body>
</html>
```

FILE: styles.css
```css
* { box-sizing: border-box; }
body {
  margin: 0;
  background: #000;
  font: 10px/14px "Open Sans", "Noto Sans", sans-serif;
  color: #333;
}
button, select { font: inherit; color: inherit; border: 0; padding: 0; background: none; }
h2, p, ul { margin: 0; padding: 0; font: inherit; list-style: none; }
svg { display: block; flex: none; }
.defs { position: absolute; width: 0; height: 0; }

.app {
  height: 100vh;
  border: solid #000;
  border-width: 0 0 29px 18px;
  background: #efefef;
  display: flex;
  flex-direction: column;
  overflow: hidden;
}

.menubar { flex: none; height: 17px; padding: 0 6px; display: flex; gap: 15px; background: #fff; font-size: 9px; }
.toolrow { flex: none; height: 35px; display: flex; border-bottom: 1px solid #c9c9c9; white-space: nowrap; }
.toolbar { display: flex; align-items: center; padding-left: 7px; position: relative; }
.toolbar + .toolbar { border-left: 1px solid #ccc; margin-left: 2px; }
.toolbar::before { content: ""; position: absolute; left: 3px; top: 4px; bottom: 4px; border-left: 1px dotted #aaa; }
.tool { width: 32px; height: 32px; display: grid; place-items: center; }
.tool svg { width: 25px; height: 25px; }
.tool.wide { width: 40px; }
.drop { width: 10px; height: 32px; display: grid; place-items: center; }
.drop::after { content: ""; border: 2px solid transparent; border-top: 3px solid #222; border-bottom: 0; }
.on { background: #c7def5; }
.drop.on { border-left: 1px solid #b3cfec; }
.sep { width: 5px; height: 26px; background: linear-gradient(#cfcfcf, #cfcfcf) center / 1px 100% no-repeat; }

.workbench { display: flex; align-items: center; position: relative; width: 117px; height: 18px; border: 1px solid #bbb; background: #e4e4e4; font-size: 9px; }
.workbench select { flex: 1; height: 16px; padding-left: 17px; appearance: none; }
.workbench svg { position: absolute; left: 2px; width: 13px; height: 13px; }
.workbench .chev { left: auto; right: 2px; width: 9px; height: 9px; }

.work { flex: 1; min-height: 0; display: flex; gap: 4px; }
.combo { width: 291px; flex: none; display: flex; flex-direction: column; border-right: 1px solid #ddd; margin-bottom: 4px; }
.dock { flex: none; height: 17px; display: flex; align-items: center; gap: 8px; padding: 0 4px; background: #d8d8d8; border: solid #bdbdbd; border-width: 1px 0; font-size: 9px; }
.dock h2 { flex: 1; }
.combo .dock { padding-right: 3px; }
.dock svg { width: 10px; height: 10px; }
.tabs { flex: none; display: flex; align-items: flex-end; height: 19px; padding-left: 1px; font-size: 9px; }
.tabs button { height: 17px; padding: 0 7px; border: 1px solid #ddd; border-bottom: 0; background: #f1f1f1; }
.tabs .cur { background: #fff; border-color: #fff; }
.tree { flex: 1; min-height: 0; margin: 0 1px 5px 1px; background: #fff; border: solid #aaa; border-width: 1px 1px 1px 0; font-size: 9px; }
.treehead { display: flex; height: 21px; }
.treehead span { width: 82px; padding: 3px 4px; border-right: 1px solid #e8e8e8; }
.treehead span:first-child { width: 140px; }
.appname { padding: 0 4px; height: 14px; }
.tree li, .tree li div { display: flex; align-items: center; height: 16px; }
.tree li { padding-left: 4px; }
.tree svg { width: 13px; height: 13px; margin-right: 4px; }
.tree .tw { width: 10px; height: 10px; margin-right: 7px; }
.tree .l1 { padding-left: 21px; }
.tree .l2 { height: 17px; padding-left: 37px; }
.tree .l3 { padding-left: 67px; }
.bold { color: #000; font-weight: 700; }
.dim { color: #8d8d8d; }
.tree li.active { padding-right: 147px; }
.active div { flex: 1; background: #e3e1fc; }
.tree li.picked { padding-right: 65px; }
.picked div { flex: 1; background: #d7d7d7; padding-left: 3px; }

.props { flex: none; height: 206px; margin: 0 3px; padding-right: 3px; display: flex; background: #fff; border: 1px solid #b5b5b5; font-size: 9px; }
.propmain { flex: 1; display: flex; flex-direction: column; min-width: 0; }
.prophead { height: 20px; flex: none; display: flex; }
.prophead span { width: 82px; padding: 3px; border-right: 1px solid #e5e5e5; }
.prophead span + span { border: 0; }
.propclip { flex: 1; overflow: hidden; }
.propclip table { width: 100%; border-collapse: collapse; margin-top: -6px; table-layout: fixed; }
.propclip tr { height: 17px; }
.propclip th, .propclip td { padding: 0 3px; border-bottom: 1px solid #d5d5d5; font-weight: 400; text-align: left; line-height: 16px; white-space: nowrap; }
.propclip th { width: 82px; padding-left: 19px; padding-right: 0; border-right: 1px solid #ccc; background: linear-gradient(#fff, #fff) 0 0 / 17px 100% no-repeat; }
.propclip tr:nth-child(odd) { background: #f3f3f3; }
.propclip .group th { padding-left: 3px; background: #9f9f9f; color: #fff; font-weight: 700; }
.chip { display: inline-block; width: 13px; height: 13px; margin-right: 5px; background: #fff; vertical-align: middle; }
.chip.grey { background: #ccc; }
.scroll { width: 14px; display: flex; flex-direction: column; align-items: center; background: #f0f0f0; }
.scroll svg { width: 9px; height: 14px; }
.scroll .thumb { width: 10px; background: #cdcdcd; flex: 48; }
.scroll .before { flex: 70; }
.scroll .after { flex: 59; }
.low { align-items: flex-start; height: 20px; background: #fcfcfc; }

.viewcol { flex: 1; min-width: 0; display: flex; flex-direction: column; }
.view { flex: 1; min-height: 0; background: linear-gradient(#343264, #656289 50%, #9593a8); }
.view svg { width: 100%; height: 100%; }
.cubetext { font: bold 7px "DejaVu Sans", sans-serif; fill: #111; }
.axistext { font: bold 6px "DejaVu Sans", sans-serif; fill: #222; }
.doctabs { flex: none; height: 23px; display: flex; align-items: flex-start; }
.doctab { height: 19px; display: flex; align-items: center; gap: 3px; padding: 0 10px; background: #fff; font-size: 9px; }
.doctab svg { width: 13px; height: 13px; }
.doctab button { width: 12px; height: 12px; display: grid; place-items: center; background: #d34a3a; border: 1px solid #8f2b22; border-radius: 2px; }
.doctab button svg { width: 8px; height: 8px; }

.report { flex: none; }
.log { height: 60px; display: flex; justify-content: space-between; background: #fff; border: solid #b9b9b9; border-width: 1px 1px 1px 0; padding-right: 3px; }
.loglines { overflow: hidden; padding-left: 4px; color: #e0a850; }
.loglines p { height: 13px; line-height: 13px; }
.loglines p:first-child { margin-top: -7px; }
.loglines time { margin-right: 10px; }
.log .scroll { width: 10px; }
.log .before { flex: 15; }
.log .thumb { flex: 15; }

.status { flex: none; height: 23px; display: flex; align-items: center; padding: 0 4px 0 1px; font-size: 9px; }
.msg { flex: 1; }
.nav { display: flex; align-items: center; gap: 2px; height: 20px; padding: 0 5px 0 1px; border-right: 1px solid #ddd; }
.nav svg { width: 13px; height: 13px; }
.tri { margin-left: 3px; border: 3px solid transparent; border-top: 4px solid #111; border-bottom: 0; }
.dims { padding-left: 4px; }
```
